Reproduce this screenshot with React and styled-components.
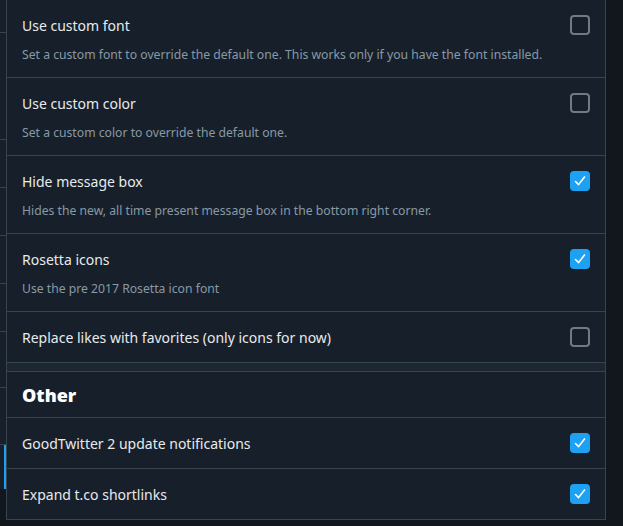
import styled, { createGlobalStyle } from 'styled-components';

const GlobalStyle = createGlobalStyle`
  html, body {
    margin: 0;
    padding: 0;
    background: #12171d;
  }
  body {
    font-family: "Noto Sans", "Open Sans", sans-serif;
  }
`;

const stripItems = [32, 106, 47, 47, 47, 47, 55, 56];

const sections = [
  {
    title: null,
    options: [
      {
        label: 'Use custom font',
        desc: 'Set a custom font to override the default one. This works only if you have the font installed.',
        checked: false,
      },
      {
        label: 'Use custom color',
        desc: 'Set a custom color to override the default one.',
        checked: false,
      },
      {
        label: 'Hide message box',
        desc: 'Hides the new, all time present message box in the bottom right corner.',
        checked: true,
      },
      {
        label: 'Rosetta icons',
        desc: 'Use the pre 2017 Rosetta icon font',
        checked: true,
      },
      {
        label: 'Replace likes with favorites (only icons for now)',
        checked: false,
      },
    ],
  },
  {
    title: 'Other',
    options: [
      { label: 'GoodTwitter 2 update notifications', checked: true },
      { label: 'Expand t.co shortlinks', checked: true },
    ],
  },
];

const Checkbox = ({ checked }) => (
  <Box $checked={checked}>
    {checked && (
      <svg width="14" height="14" viewBox="0 0 14 14">
        <path d="M2.5 7.5 L5.6 10.6 L11.5 3" fill="none" stroke="#fff" strokeWidth="1.6" strokeLinecap="round" strokeLinejoin="round" />
      </svg>
    )}
  </Box>
);

const App = () => (
  <>
    <GlobalStyle />
    <Page>
      <Strip>
        {stripItems.map((h, i) => (
          <StripItem key={i} style={{ height: h }} />
        ))}
        <StripActive />
      </Strip>
      <Panel>
        {sections.map((section, si) => (
          <Section key={si} $first={si === 0}>
            {section.title && <SectionTitle>{section.title}</SectionTitle>}
            {section.options.map((opt, oi) => (
              <Row key={oi}>
                <RowText>
                  <Label>{opt.label}</Label>
                  {opt.desc && <Desc>{opt.desc}</Desc>}
                </RowText>
                <Checkbox checked={opt.checked} />
              </Row>
            ))}
          </Section>
        ))}
      </Panel>
    </Page>
  </>
);

const Page = styled.div`
  display: flex;
  align-items: flex-start;
  height: 526px;
  overflow: hidden;
  background: #12171d;
`;

const Strip = styled.div`
  width: 6px;
  display: flex;
  flex-direction: column;
  flex-shrink: 0;
`;

const StripItem = styled.div`
  background: #17202a;
  border-bottom: 1px solid #38444d;
`;

const StripActive = styled.div`
  height: 44px;
  background: #17202a;
  border-right: 2px solid #1da1f2;
`;

const Panel = styled.div`
  width: 598px;
  flex-shrink: 0;
  background: #1c2732;
  border-left: 1px solid #38444d;
  border-right: 1px solid #38444d;
`;

const Section = styled.div`
  background: #17202a;
  margin-top: ${p => (p.$first ? '0' : '8px')};
  border-top: ${p => (p.$first ? 'none' : '1px solid #38444d')};
`;

const SectionTitle = styled.div`
  height: 45px;
  display: flex;
  align-items: center;
  padding: 0 15px;
  font-size: 18px;
  font-weight: 900;
  color: #ffffff;
  border-bottom: 1px solid #38444d;
`;

const Row = styled.div`
  display: flex;
  align-items: flex-start;
  justify-content: space-between;
  padding: 15px 15px 14px;
  border-bottom: 1px solid #38444d;
`;

const RowText = styled.div`
  display: flex;
  flex-direction: column;
  padding-top: 1px;
  white-space: nowrap;
`;

const Label = styled.div`
  font-size: 14px;
  line-height: 20px;
  color: #e7eaed;
`;

const Desc = styled.div`
  margin-top: 11px;
  font-size: 12.2px;
  line-height: 16px;
  color: #8899a6;
`;

const Box = styled.div`
  box-sizing: border-box;
  flex-shrink: 0;
  width: 20px;
  height: 20px;
  border-radius: 4px;
  display: flex;
  align-items: center;
  justify-content: center;
  background: ${p => (p.$checked ? '#1da1f2' : 'transparent')};
  border: ${p => (p.$checked ? 'none' : '2px solid #6e7a86')};
`;

export default App;
